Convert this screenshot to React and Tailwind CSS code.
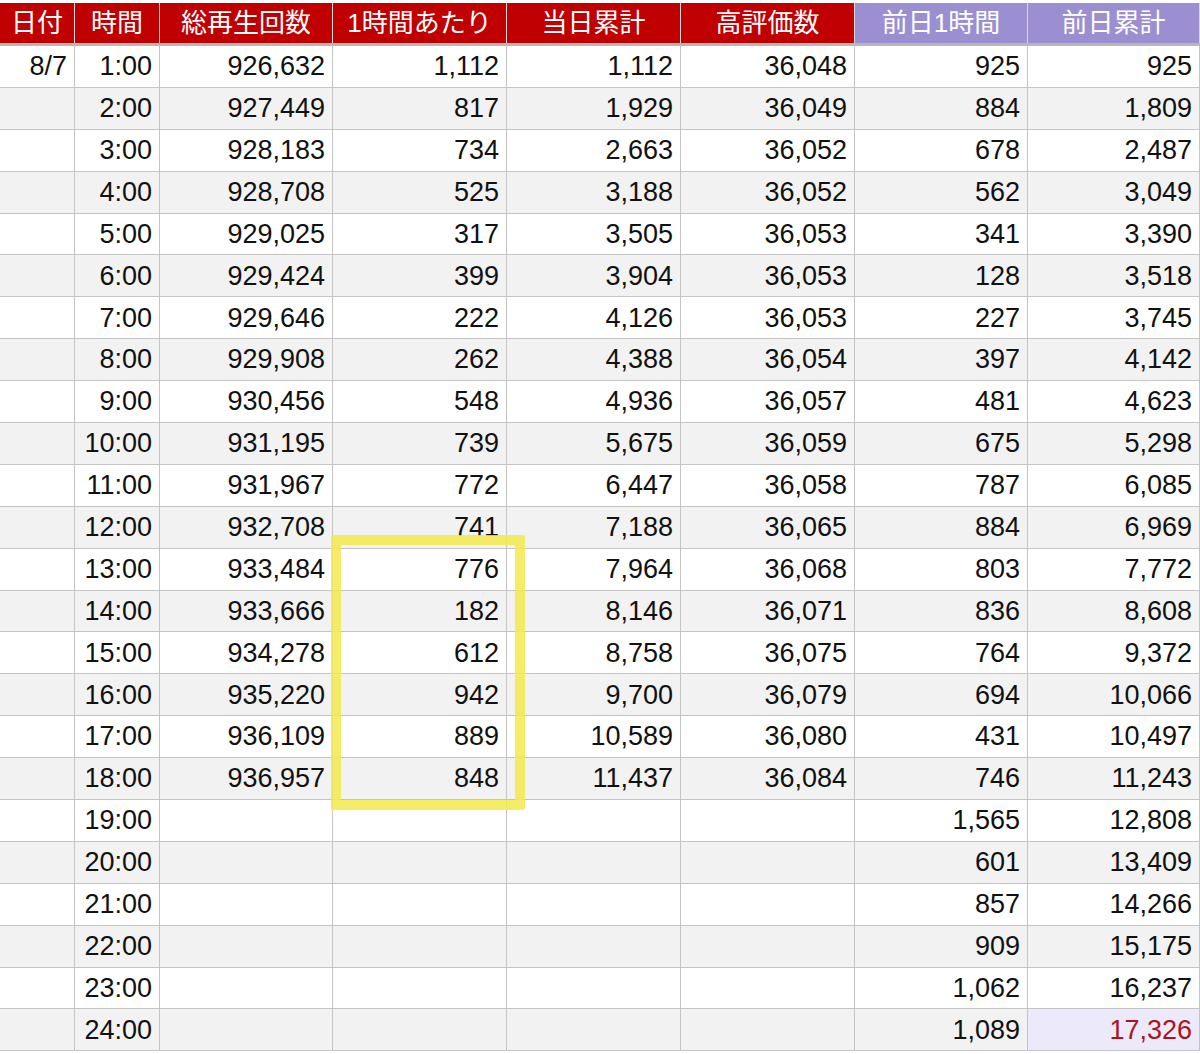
const rows = [
  ['8/7', '1:00', '926,632', '1,112', '1,112', '36,048', '925', '925'],
  ['', '2:00', '927,449', '817', '1,929', '36,049', '884', '1,809'],
  ['', '3:00', '928,183', '734', '2,663', '36,052', '678', '2,487'],
  ['', '4:00', '928,708', '525', '3,188', '36,052', '562', '3,049'],
  ['', '5:00', '929,025', '317', '3,505', '36,053', '341', '3,390'],
  ['', '6:00', '929,424', '399', '3,904', '36,053', '128', '3,518'],
  ['', '7:00', '929,646', '222', '4,126', '36,053', '227', '3,745'],
  ['', '8:00', '929,908', '262', '4,388', '36,054', '397', '4,142'],
  ['', '9:00', '930,456', '548', '4,936', '36,057', '481', '4,623'],
  ['', '10:00', '931,195', '739', '5,675', '36,059', '675', '5,298'],
  ['', '11:00', '931,967', '772', '6,447', '36,058', '787', '6,085'],
  ['', '12:00', '932,708', '741', '7,188', '36,065', '884', '6,969'],
  ['', '13:00', '933,484', '776', '7,964', '36,068', '803', '7,772'],
  ['', '14:00', '933,666', '182', '8,146', '36,071', '836', '8,608'],
  ['', '15:00', '934,278', '612', '8,758', '36,075', '764', '9,372'],
  ['', '16:00', '935,220', '942', '9,700', '36,079', '694', '10,066'],
  ['', '17:00', '936,109', '889', '10,589', '36,080', '431', '10,497'],
  ['', '18:00', '936,957', '848', '11,437', '36,084', '746', '11,243'],
  ['', '19:00', '', '', '', '', '1,565', '12,808'],
  ['', '20:00', '', '', '', '', '601', '13,409'],
  ['', '21:00', '', '', '', '', '857', '14,266'],
  ['', '22:00', '', '', '', '', '909', '15,175'],
  ['', '23:00', '', '', '', '', '1,062', '16,237'],
  ['', '24:00', '', '', '', '', '1,089', '17,326'],
];

const widths = ['w-[75px]', 'w-[85px]', 'w-[173px]', 'w-[174px]', 'w-[174px]', 'w-[174px]', 'w-[173px]', 'w-[172px]'];
const heads = ['日付', '時間', '総再生回数', '1時間あたり', '当日累計', '高評価数', '前日1時間', '前日累計'];

export default function App() {
  return (
    <div className="relative w-[1200px] h-[1054px] overflow-hidden bg-white" style={{ fontFamily: '"Liberation Sans", "Noto Sans CJK JP", sans-serif' }}>
      <div className="flex h-[46px] border-b-[3px] border-[#b8b8b8] pt-[3px]">
        {heads.map((h, i) => (
          <div
            key={h}
            className={`${widths[i]} shrink-0 flex items-center justify-center text-[26px] text-white border-r border-[#d9d9d9] ${i >= 6 ? 'bg-[#9b8fd2]' : 'bg-[#c00000]'}`}
          >
            {h}
          </div>
        ))}
      </div>
      {rows.map((r, ri) => (
        <div key={ri} className={`flex h-[41.9px] border-b border-[#c4c4c4] ${ri % 2 ? 'bg-[#f2f2f2]' : 'bg-white'}`}>
          {r.map((c, ci) => (
            <div
              key={ci}
              className={`${widths[ci]} shrink-0 flex items-center justify-end pr-[7px] text-[27px] border-r border-[#c4c4c4] ${
                ri === 23 && ci === 7 ? 'bg-[#ece9fb] text-[#b0121b]' : 'text-[#111]'
              }`}
            >
              {c}
            </div>
          ))}
        </div>
      ))}
      <div className="absolute left-[331px] top-[535px] w-[194px] h-[275px] border-[10px] border-[#f3ea4c]/85 rounded-[3px]" />
    </div>
  );
}
